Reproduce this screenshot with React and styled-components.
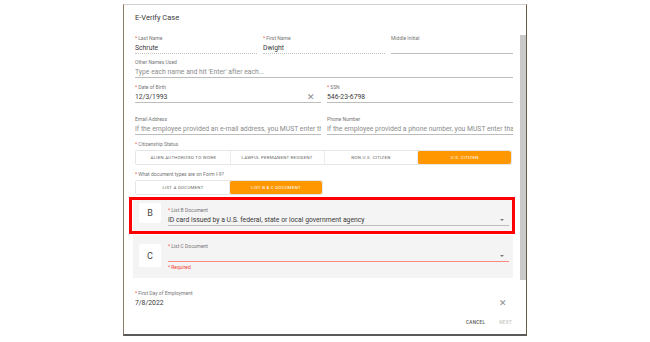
import React from 'react';
import styled, {createGlobalStyle} from 'styled-components';

const GlobalStyle = createGlobalStyle`
  html, body {
    margin: 0;
    padding: 0;
    background: #ffffff;
    font-family: Roboto, "Liberation Sans", sans-serif;
  }
`
const Page = styled.div`
  width: 650px;
  height: 342px;
  display: flex;
  justify-content: center;
  padding-top: 4px;
  box-sizing: border-box;
`
const Dialog = styled.div`
  width: 404px;
  height: 332px;
  box-sizing: border-box;
  background: #ffffff;
  border: 1px solid #7a7a7a;
  border-top-color: #d0d0d0;
  border-bottom: 2px solid #5a5a5a;
  border-left-color: #8a7a66;
  border-right-color: #6b5a44;
  display: flex;
  flex-direction: column;
`
const Title = styled.div`
  font-size: 7.5px;
  color: #3a3a3a;
  padding: 8px 0 0 11px;
  height: 20px;
  box-sizing: border-box;
`
const Body = styled.div`
  display: flex;
  flex: 1;
  min-height: 0;
`
const Content = styled.div`
  flex: 1;
  padding: 10px 7px 0 11px;
  display: flex;
  flex-direction: column;
`
const Scrollbar = styled.div`
  width: 6px;
  padding-top: 10px;
  display: flex;
  flex-direction: column;
`
const Thumb = styled.div`
  height: 245px;
  background: #c9c9c9;
`
const Row = styled.div`
  display: grid;
  grid-template-columns: repeat(${p => p.cols || 1}, 1fr);
  column-gap: 6px;
  margin-top: ${p => p.mt || 0}px;
`
const FieldBox = styled.div`
  min-width: 0;
  flex: 1;
`
const Label = styled.div`
  font-size: 5px;
  line-height: 6px;
  color: #777;
  white-space: nowrap;
  margin-top: ${p => p.mt || 0}px;
`
const Star = styled.span`
  color: #f44336;
  margin-right: 1px;
`
const ValueLine = styled.div`
  display: flex;
  align-items: center;
  margin-top: 2px;
  height: 10px;
  border-bottom: 1px ${p => p.dotted ? 'dotted' : 'solid'} ${p => p.error ? '#ff8a80' : p.dotted ? '#c4c4c4' : p.none ? 'transparent' : '#bdbdbd'};
`
const Value = styled.div`
  flex: 1;
  font-size: 6.8px;
  color: ${p => p.placeholder ? '#8c8c8c' : '#3a3a3a'};
  white-space: nowrap;
  overflow: hidden;
`
const Clear = styled.span`
  font-size: 9px;
  color: #8a8a8a;
  line-height: 8px;
  margin-right: 6px;
  font-weight: 300;
`
const Caret = styled.span`
  width: 0;
  height: 0;
  border-left: 2px solid transparent;
  border-right: 2px solid transparent;
  border-top: 2px solid #777;
  margin-right: 5px;
`
const Helper = styled.div`
  font-size: 5px;
  line-height: 6px;
  color: #f44336;
  margin-top: 2px;
`
const Group = styled.div`
  display: flex;
  width: ${p => p.width}px;
  height: 15px;
  margin-top: 3px;
  border: 1px solid #e6e6e6;
  border-radius: 2px;
  box-sizing: border-box;
`
const Toggle = styled.div`
  flex: 1;
  display: flex;
  align-items: center;
  justify-content: center;
  font-size: 4.4px;
  letter-spacing: 0.25px;
  text-transform: uppercase;
  color: ${p => p.active ? '#fff' : '#666'};
  background: ${p => p.active ? '#ff9800' : '#fff'};
  border-left: 1px solid ${p => p.first ? 'transparent' : '#ececec'};
  border-radius: ${p => p.active ? '2px' : '0'};
  white-space: nowrap;
`
const CardWrap = styled.div`
  position: relative;
  margin-top: ${p => p.mt || 0}px;
  margin-left: -2px;
`
const Card = styled.div`
  background: #f4f4f4;
  display: flex;
  align-items: flex-start;
  padding: ${p => p.pad};
  gap: 7px;
`
const Letter = styled.div`
  width: 22px;
  height: ${p => p.h}px;
  background: #fff;
  border-radius: 2px;
  display: flex;
  align-items: center;
  justify-content: center;
  font-size: 9px;
  color: #444;
  flex-shrink: 0;
  margin-top: ${p => p.mt || 0}px;
`
const Highlight = styled.div`
  position: absolute;
  top: -1px;
  left: -4px;
  right: -2px;
  bottom: -1px;
  border: 3px solid #ff0000;
  pointer-events: none;
`
const Actions = styled.div`
  display: flex;
  justify-content: flex-end;
  align-items: center;
  gap: 14px;
  padding: 0 14px 9px 0;
`
const Action = styled.span`
  font-size: 4.6px;
  letter-spacing: 0.3px;
  font-weight: 500;
  color: ${p => p.disabled ? '#c4c4c4' : '#555'};
`

const Field = ({label, required, value, placeholder, clear, dotted, caret, error, none, helper, style}) => (
  <FieldBox style={style}>
    <Label>{required && <Star>*</Star>}{label}</Label>
    <ValueLine dotted={dotted} error={error} none={none}>
      <Value placeholder={placeholder ? 1 : 0}>{value || placeholder}</Value>
      {clear && <Clear>✕</Clear>}
      {caret && <Caret />}
    </ValueLine>
    {helper && <Helper><Star>*</Star>{helper}</Helper>}
  </FieldBox>
)

export default function App() {
  return (
    <Page>
      <GlobalStyle />
      <Dialog>
        <Title>E-Verify Case</Title>
        <Body>
          <Content>
            <Row cols={3}>
              <Field required label="Last Name" value="Schrute" dotted />
              <Field required label="First Name" value="Dwight" dotted />
              <Field label="Middle Initial" value="" />
            </Row>
            <Row mt={5}>
              <Field label="Other Names Used" placeholder="Type each name and hit 'Enter' after each..." />
            </Row>
            <Row cols={2} mt={6}>
              <Field required label="Date of Birth" value="12/3/1993" clear />
              <Field required label="SSN" value="546-23-6798" />
            </Row>
            <Row cols={2} mt={13}>
              <Field label="Email Address" placeholder="If the employee provided an e-mail address, you MUST enter th" />
              <Field label="Phone Number" placeholder="If the employee provided a phone number, you MUST enter tha" />
            </Row>
            <Label mt={6}><Star>*</Star>Citizenship Status</Label>
            <Group width={377}>
              <Toggle first>Alien authorized to work</Toggle>
              <Toggle>Lawful permanent resident</Toggle>
              <Toggle>Non U.S. citizen</Toggle>
              <Toggle active>U.S. citizen</Toggle>
            </Group>
            <Label mt={6}><Star>*</Star>What document types are on Form I-9?</Label>
            <Group width={188}>
              <Toggle first>List A document</Toggle>
              <Toggle active>List B &amp; C document</Toggle>
            </Group>
            <CardWrap mt={3}>
              <Card pad="5px 4px 7px 6px">
                <Letter h={20}>B</Letter>
                <Field required label="List B Document" value="ID card issued by a U.S. federal, state or local government agency" caret style={{marginTop: 4}} />
              </Card>
              <Highlight />
            </CardWrap>
            <CardWrap mt={2}>
              <Card pad="8px 4px 8px 6px">
                <Letter h={23} mt={1}>C</Letter>
                <Field required label="List C Document" value="" caret error helper="Required" />
              </Card>
            </CardWrap>
            <Row mt={12}>
              <Field required label="First Day of Employment" value="7/8/2022" clear none />
            </Row>
          </Content>
          <Scrollbar>
            <Thumb />
          </Scrollbar>
        </Body>
        <Actions>
          <Action>CANCEL</Action>
          <Action disabled>NEXT</Action>
        </Actions>
      </Dialog>
    </Page>
  );
}
